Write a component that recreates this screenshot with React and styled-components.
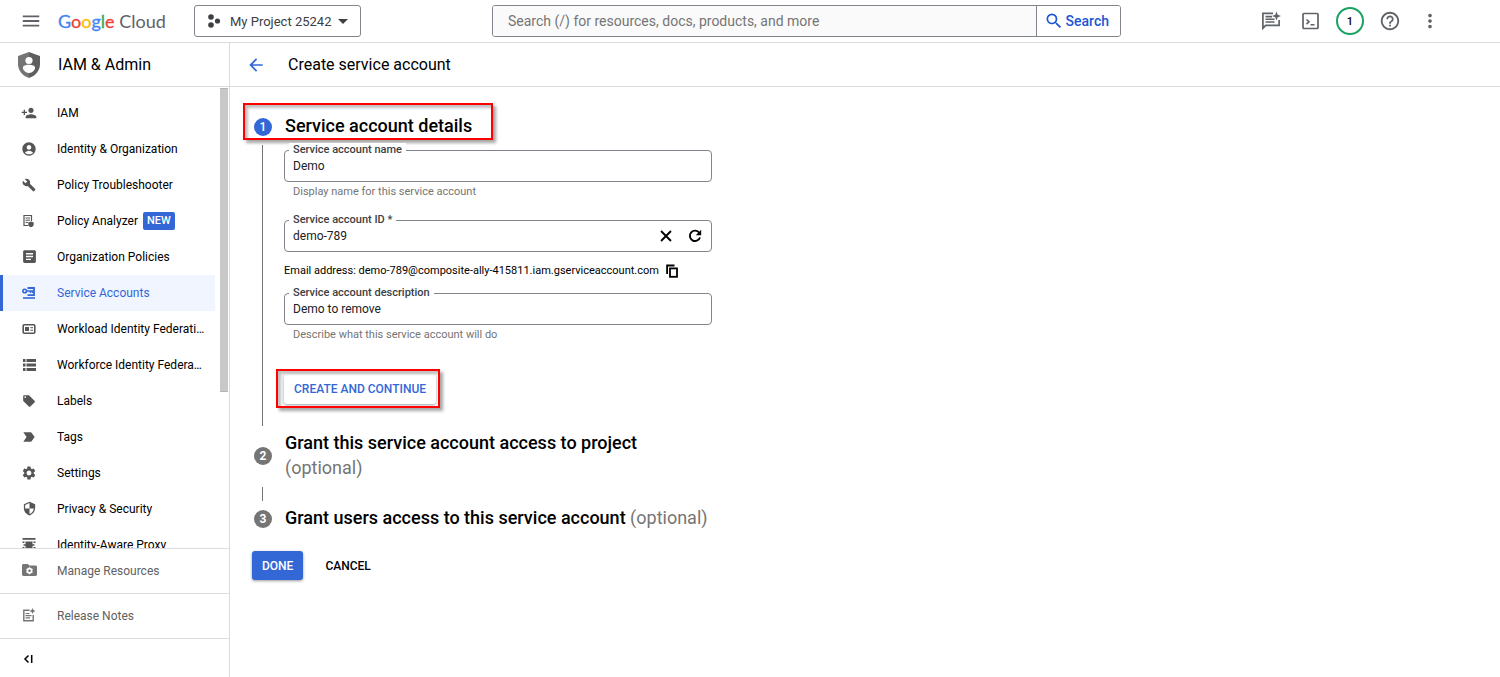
import React from 'react';
import styled, { createGlobalStyle } from 'styled-components';
import {
    MdPersonAdd,
    MdAccountCircle,
    MdBuild,
    MdArticle,
    MdLocalOffer,
    MdLabelImportant,
    MdSettings,
    MdSecurity,
    MdSearch,
    MdMenu,
    MdArrowDropDown,
    MdArrowBack,
    MdHelpOutline,
    MdMoreVert,
} from 'react-icons/md';

const GlobalStyle = createGlobalStyle`
    *, *::before, *::after {
        box-sizing: border-box;
    }
    body {
        margin: 0;
        background: #fff;
        color: #000;
        font-family: Roboto, "Liberation Sans", sans-serif;
        font-size: 12px;
    }
    button, input {
        font-family: inherit;
    }
    a {
        color: inherit;
        text-decoration: none;
    }
    svg {
        display: block;
        flex-shrink: 0;
    }
`;

const Page = styled.div`
    display: flex;
    flex-direction: column;
    height: 100vh;
`;

/* Top bar */

const TopBar = styled.header`
    display: grid;
    grid-template-columns: 492px minmax(0, 629px) 1fr;
    align-items: center;
    height: 43px;
    flex-shrink: 0;
    border-bottom: 1px solid #dadce0;
`;

const TopLeft = styled.div`
    display: flex;
    align-items: center;
    padding-left: 21px;
`;

const IconButton = styled.button`
    display: flex;
    align-items: center;
    justify-content: center;
    width: ${props => props.$size || 20}px;
    height: ${props => props.$size || 20}px;
    padding: 0;
    border: 0;
    background: none;
    color: ${props => props.$color || '#5f6368'};
    cursor: pointer;
`;

const Logo = styled.a`
    width: 136px;
    padding-left: 17px;
    font-family: Lato, sans-serif;
    font-size: 18px;
    line-height: 24px;
    color: #5f6368;
    white-space: nowrap;
`;

const LogoLetter = styled.span`
    color: ${props => props.$color};
    -webkit-text-stroke: 0.3px ${props => props.$color};
`;

const ProjectPicker = styled.button`
    display: flex;
    align-items: center;
    height: 32px;
    margin-left: 17px;
    padding: 0 5px 0 12px;
    border: 1px solid #80868b;
    border-radius: 3px;
    background: #fff;
    color: #3c4043;
    font-size: 13px;
    white-space: nowrap;
`;

const ProjectName = styled.span`
    margin-left: 9px;
`;

const SearchForm = styled.form`
    display: flex;
    height: 32px;
    border: 1px solid #80868b;
    border-radius: 3px;
    overflow: hidden;
`;

const SearchInput = styled.input`
    flex: 1;
    min-width: 0;
    padding: 0 15px;
    border: 0;
    border-right: 1px solid #80868b;
    background: #fafafa;
    font-size: 14px;
    &::placeholder {
        color: #757575;
        opacity: 1;
    }
`;

const SearchButton = styled.button`
    display: flex;
    align-items: center;
    gap: 2px;
    padding: 0 11px 0 7px;
    border: 0;
    background: #fff;
    color: #1a56d6;
    font-size: 14px;
    font-weight: 500;
`;

const TopRight = styled.div`
    display: flex;
    justify-content: flex-end;
    padding-right: 50px;
`;

const TrialBadge = styled.span`
    display: flex;
    align-items: center;
    justify-content: center;
    width: 28px;
    height: 28px;
    border: 2px solid #1aa260;
    border-radius: 50%;
    color: #000;
    font-size: 11px;
    font-weight: 500;
`;

/* Sidebar */

const Body = styled.div`
    display: grid;
    grid-template-columns: 230px minmax(0, 1fr);
    flex: 1;
    min-height: 0;
`;

const Sidebar = styled.aside`
    display: flex;
    flex-direction: column;
    min-height: 0;
    border-right: 1px solid #dadce0;
`;

const SectionHead = styled.div`
    display: flex;
    align-items: center;
    gap: ${props => (props.$wide ? 22 : 18)}px;
    height: 44px;
    flex-shrink: 0;
    padding-left: ${props => (props.$wide ? 16 : 18)}px;
    border-bottom: 1px solid #dadce0;
    font-size: 16px;
`;

const Heading = styled.h1`
    margin: 0;
    font-size: 16px;
    font-weight: 400;
`;

const NavScroll = styled.div`
    display: grid;
    grid-template-columns: minmax(0, 1fr) 8px;
    grid-template-rows: 100%;
    column-gap: 5px;
    flex: 1;
    min-height: 0;
    padding-right: 1px;
    overflow: hidden;
`;

const NavList = styled.ul`
    min-width: 0;
    margin: 0;
    padding: 8px 0 0;
    list-style: none;
`;

const NavLink = styled.a`
    display: flex;
    align-items: center;
    height: 36px;
    padding: 0 8px 0 19px;
    border-left: 3px solid ${props => (props.$active ? '#3367d6' : 'transparent')};
    background: ${props => (props.$active ? '#f0f5ff' : 'transparent')};
    color: ${props => (props.$active ? '#3367d6' : '#000')};
    svg {
        color: ${props => (props.$active ? '#3367d6' : '#555')};
    }
`;

const NavText = styled.span`
    margin-left: 21px;
    white-space: nowrap;
`;

const NewBadge = styled.span`
    margin-left: 5px;
    padding: 0 4px;
    border-radius: 2px;
    background: #3367d6;
    color: #fff;
    font-size: 11px;
    font-weight: 500;
    line-height: 18px;
`;

const ScrollThumb = styled.div`
    height: 66%;
    margin-top: 1px;
    background: #c8c8c8;
    border: solid #b4b4b4;
    border-width: 1px 0;
`;

const FootLink = styled.a`
    display: flex;
    align-items: center;
    height: 45px;
    flex-shrink: 0;
    padding: 0 0 1px 22px;
    border-top: 1px solid #dadce0;
    color: #616161;
`;

const CollapseRow = styled.div`
    display: flex;
    align-items: center;
    height: 39px;
    flex-shrink: 0;
    padding: 2px 0 0 18px;
    border-top: 1px solid #dadce0;
`;

/* Main */

const Main = styled.main`
    min-width: 0;
    min-height: 0;
`;

const Content = styled.div`
    padding: 26px 22px;
`;

const Steps = styled.div`
    max-width: 460px;
    padding-left: 2px;
`;

const StepHead = styled.div`
    position: relative;
    display: flex;
    align-items: center;
    gap: 13px;
    width: fit-content;
`;

const StepNumber = styled.span`
    display: flex;
    align-items: center;
    justify-content: center;
    width: 18px;
    height: 18px;
    flex-shrink: 0;
    border-radius: 50%;
    background: ${props => (props.$active ? '#3367d6' : '#757575')};
    color: #fff;
    font-size: 12px;
    font-weight: ${props => (props.$active ? 500 : 700)};
`;

const StepTitle = styled.h2`
    margin: 0;
    padding-bottom: 2px;
    font-size: 18px;
    font-weight: 500;
    line-height: 25px;
`;

const Optional = styled.span`
    color: #757575;
    font-weight: 400;
`;

const Rail = styled.div`
    min-height: 14px;
    margin: 5px 0 4px 8px;
    padding-left: 21px;
    border-left: 1px solid #757575;
`;

const Form = styled.form`
    padding: 5px 0 22px;
`;

/* red frame drawn around the thing to click */
const Marker = styled.span`
    position: absolute;
    inset: ${props => props.$inset};
    border: 2px solid #f00;
    box-shadow: 3px 3px 3px rgba(0, 0, 0, 0.35), inset 3px 3px 3px rgba(0, 0, 0, 0.25);
    pointer-events: none;
`;

const FieldBox = styled.div`
    position: relative;
    display: flex;
    align-items: center;
    gap: 9px;
    height: 32px;
    padding: 0 6px 0 8px;
    border: 1px solid #80868b;
    border-radius: 4px;
`;

const FieldLabel = styled.label`
    position: absolute;
    top: -8px;
    left: 4px;
    padding: 0 4px;
    background: #fff;
    color: #3c4043;
    font-size: 11px;
    font-weight: 500;
    line-height: 14px;
`;

const FieldInput = styled.input`
    flex: 1;
    min-width: 0;
    padding: 0;
    border: 0;
    outline: 0;
    background: none;
    color: #202124;
    font-size: 12px;
`;

const Hint = styled.div`
    padding: 1px 0 0 9px;
    color: #757575;
    font-size: 11px;
    line-height: 18px;
`;

const EmailRow = styled.div`
    display: flex;
    align-items: center;
    gap: 4px;
    margin: 10px 0 13px;
    font-size: 11px;
    line-height: 18px;
    white-space: nowrap;
`;

const IdField = styled.div`
    margin-top: 19px;
`;

const CreateWrap = styled.div`
    position: relative;
    width: fit-content;
    margin-top: 30px;
`;

const Button = styled.button`
    height: ${props => props.$height || 29}px;
    padding: 0 10px;
    border: 0;
    border-radius: 3px;
    background: ${props => (props.$primary ? '#3367d6' : '#fff')};
    color: ${props => props.$color};
    box-shadow: ${props => (props.$flat ? 'none' : '0 1px 3px rgba(0, 0, 0, 0.4)')};
    font-size: 12px;
    font-weight: 500;
`;

const Actions = styled.div`
    display: flex;
    gap: 12px;
    margin-top: 19px;
`;

/* Icons that the md set does not have */

const Shield = () => (
    <svg width="22" height="26" viewBox="0 0 22 26">
        <path d="M11 0L0 4v8c0 6.600 4.700 12 11 14z" fill="#757575" />
        <path d="M11 0l11 4v8c0 6.600-4.700 12-11 14z" fill="#5f5f5f" />
        <circle cx="11" cy="8.500" r="3.600" fill="#fff" />
        <path d="M5 17v-1.500c0-1.700 2.800-2.700 6-2.700s6 1 6 2.700V17c-1.600 2.600-3.500 3.900-6 3.900S6.600 19.600 5 17z" fill="#fff" />
    </svg>
);

const ProjectDots = () => (
    <svg width="14" height="14" viewBox="0 0 14 14" fill="#3c4043">
        <circle cx="4" cy="3" r="2.800" />
        <circle cx="10.500" cy="7" r="2.600" />
        <circle cx="4" cy="11" r="2.800" />
    </svg>
);

const PolicyAnalyzerIcon = () => (
    <svg width="14" height="14" viewBox="0 0 14 14" fill="none" stroke="currentColor">
        <path d="M6.500 11.500H2V1.500h7.500V7" strokeWidth="1.200" />
        <path d="M3.500 4h4.500M3.500 6.200h4.500M3.500 8.400h2.500" />
        <path d="M9 7.500l2.700 1v1.700c0 1.500-1 2.500-2.700 3.100-1.700-.6-2.700-1.600-2.700-3.100V8.500z" fill="currentColor" stroke="none" />
    </svg>
);

const ServiceAccountIcon = () => (
    <svg width="14" height="14" viewBox="0 0 14 14" fill="none" stroke="currentColor">
        <circle cx="2.700" cy="5" r="1.800" strokeWidth="1.600" />
        <path d="M4.500 5h6v2M8.500 5v2" strokeWidth="1.400" />
        <path d="M5.500 2h6.500v7.200H5.500" strokeWidth="1.800" />
        <path d="M1 12h12" strokeWidth="1.600" />
    </svg>
);

const WorkloadIcon = () => (
    <svg width="14" height="14" viewBox="0 0 14 14" fill="none" stroke="currentColor">
        <rect x="1.200" y="2.700" width="11.600" height="8.600" rx="1" strokeWidth="1.600" />
        <rect x="3" y="5" width="4" height="4" fill="currentColor" stroke="none" />
        <path d="M8.300 5.700h2.700M8.300 8.200h2.700" />
    </svg>
);

const WorkforceIcon = () => (
    <svg width="14" height="14" viewBox="0 0 14 14" fill="currentColor">
        <path d="M1 1h2.500v3H1zM4.500 1H14v3H4.500zM1 5.500h2.500v3H1zM4.500 5.500H14v3H4.500zM1 10h2.500v3H1zM4.500 10H14v3H4.500z" />
    </svg>
);

const ProxyIcon = () => (
    <svg width="14" height="14" viewBox="0 0 14 14" fill="currentColor">
        <path d="M.5 0h13v1.800H.5zM.5 12.200h13V14H.5zM3.500 3.500h7v7h-7zM.5 3.500h2v1.500H.5zM11.500 3.500h2v1.500h-2zM.5 9h2v1.500H.5zM11.500 9h2v1.500h-2zM1.500 6.200h11v1.600h-11z" />
    </svg>
);

const FolderGearIcon = () => (
    <svg width="15" height="14" viewBox="0 0 15 14">
        <path d="M1.500 1h4.300l1.500 1.600h6.200c.8 0 1.500.6 1.500 1.400v7.600c0 .8-.7 1.400-1.500 1.400h-12C.7 13 0 12.400 0 11.600V2.400C0 1.600.7 1 1.500 1z" fill="#757575" />
        <circle cx="7.500" cy="7.700" r="2.100" fill="none" stroke="#fff" strokeWidth="1.600" />
        <path d="M7.500 4.200v1.300M7.500 9.900v1.300M4.500 6l1.100.6M9.400 8.800l1.100.6M4.500 9.400l1.100-.6M9.400 6.600l1.100-.6" stroke="#fff" strokeWidth="1.400" />
    </svg>
);

const ReleaseNotesIcon = () => (
    <svg width="15" height="14" viewBox="0 0 15 14" fill="none" stroke="#757575" strokeWidth="1.400">
        <path d="M7.500 2.200H1.800v10.600h9.400V7" />
        <path d="M3.500 5.500h4M3.500 7.700h6M3.500 9.900h4.500" strokeWidth="1.200" />
        <path d="M10.500 0l.9 2.100 2.100.9-2.100.9-.9 2.100-.9-2.100L7.500 3l2.100-.9z" fill="#757575" stroke="none" />
    </svg>
);

const FeedbackIcon = () => (
    <svg width="22" height="20" viewBox="-2 0 22 20" fill="none" stroke="currentColor" strokeWidth="1.700">
        <path d="M12 2.300H1.900v14.900l2.800-2.800h13.400V9" />
        <path d="M4.500 5.600h6.500M4.500 8.300h9M4.500 11h9" strokeWidth="1.600" />
        <path d="M15.500.5l1.200 3.300L20 5l-3.300 1.200-1.200 3.300-1.200-3.300L11 5l3.300-1.200z" fill="currentColor" stroke="none" />
    </svg>
);

const ShellIcon = () => (
    <svg width="20" height="18" viewBox="-2 0 20 18" fill="none" stroke="currentColor" strokeWidth="1.700">
        <rect x="1" y="1.500" width="15" height="15" rx="1" />
        <path d="M4.500 7.500l2.500 2.300-2.500 2.300M8.500 12.800h4" strokeWidth="1.600" />
    </svg>
);

const ClearIcon = () => (
    <svg width="12" height="12" viewBox="0 0 12 12" fill="none" stroke="currentColor" strokeWidth="1.900">
        <path d="M1 1l10 10M11 1L1 11" />
    </svg>
);

const RegenerateIcon = () => (
    <svg width="14" height="14" viewBox="0 0 14 14" fill="none" stroke="currentColor" strokeWidth="1.900">
        <path d="M11.300 3.800A5.200 5.200 0 1 0 12 8.500" />
        <path d="M13.200.8v5.400H7.800z" fill="currentColor" stroke="none" />
    </svg>
);

const CopyIcon = () => (
    <svg width="12" height="14" viewBox="0 0 12 14" fill="none" stroke="currentColor" strokeWidth="1.800">
        <path d="M1.100 10V1.500h7.400" />
        <rect x="4" y="4.400" width="7" height="8.400" />
    </svg>
);

const CollapseIcon = () => (
    <svg width="12" height="12" viewBox="0 0 12 12" fill="none" stroke="#000" strokeWidth="1.500">
        <path d="M6.500 2.500L3 6l3.500 3.500M9.700 2v8" />
    </svg>
);

const navItems = [
    { text: 'IAM', icon: <MdPersonAdd size={16} /> },
    { text: 'Identity & Organization', icon: <MdAccountCircle size={16} /> },
    { text: 'Policy Troubleshooter', icon: <MdBuild size={14} /> },
    { text: 'Policy Analyzer', icon: <PolicyAnalyzerIcon />, isNew: true },
    { text: 'Organization Policies', icon: <MdArticle size={17} /> },
    { text: 'Service Accounts', icon: <ServiceAccountIcon />, active: true },
    { text: 'Workload Identity Federati…', icon: <WorkloadIcon /> },
    { text: 'Workforce Identity Federa…', icon: <WorkforceIcon /> },
    { text: 'Labels', icon: <MdLocalOffer size={14} /> },
    { text: 'Tags', icon: <MdLabelImportant size={16} /> },
    { text: 'Settings', icon: <MdSettings size={16} /> },
    { text: 'Privacy & Security', icon: <MdSecurity size={15} /> },
    { text: 'Identity-Aware Proxy', icon: <ProxyIcon /> },
];

const NavIcon = styled.span`
    display: flex;
    justify-content: center;
    width: 14px;
    flex-shrink: 0;
    padding-bottom: 1px;
`;

const logoLetters = [
    ['G', '#4285f4'],
    ['o', '#ea4335'],
    ['o', '#fbbc04'],
    ['g', '#4285f4'],
    ['l', '#34a853'],
    ['e', '#ea4335'],
];

const Header = () => {
    return (
        <TopBar>
            <TopLeft>
                <IconButton aria-label="Menu"><MdMenu size={22} /></IconButton>
                <Logo href="#">
                    {logoLetters.map(([letter, color], i) => (
                        <LogoLetter key={i} $color={color}>{letter}</LogoLetter>
                    ))}
                    {' '}Cloud
                </Logo>
                <ProjectPicker>
                    <ProjectDots />
                    <ProjectName>My Project 25242</ProjectName>
                    <MdArrowDropDown size={24} />
                </ProjectPicker>
            </TopLeft>
            <SearchForm>
                <SearchInput
                    aria-label="Search"
                    placeholder="Search (/) for resources, docs, products, and more"
                />
                <SearchButton type="button"><MdSearch size={20} />Search</SearchButton>
            </SearchForm>
            <TopRight>
                <IconButton $size={40} aria-label="Feedback"><FeedbackIcon /></IconButton>
                <IconButton $size={40} aria-label="Cloud Shell"><ShellIcon /></IconButton>
                <IconButton $size={40} aria-label="Free trial status"><TrialBadge>1</TrialBadge></IconButton>
                <IconButton $size={40} aria-label="Help"><MdHelpOutline size={22} /></IconButton>
                <IconButton $size={40} aria-label="More"><MdMoreVert size={22} /></IconButton>
            </TopRight>
        </TopBar>
    )
}

const SideNav = () => {
    return (
        <Sidebar>
            <SectionHead><Shield />IAM &amp; Admin</SectionHead>
            <NavScroll>
                <NavList>
                    {navItems.map(item => (
                        <li key={item.text}>
                            <NavLink href="#" $active={item.active}>
                                <NavIcon>{item.icon}</NavIcon>
                                <NavText>{item.text}</NavText>
                                {item.isNew && <NewBadge>NEW</NewBadge>}
                            </NavLink>
                        </li>
                    ))}
                </NavList>
                <ScrollThumb />
            </NavScroll>
            <FootLink href="#"><NavIcon><FolderGearIcon /></NavIcon><NavText>Manage Resources</NavText></FootLink>
            <FootLink href="#"><NavIcon><ReleaseNotesIcon /></NavIcon><NavText>Release Notes</NavText></FootLink>
            <CollapseRow>
                <IconButton aria-label="Collapse menu"><CollapseIcon /></IconButton>
            </CollapseRow>
        </Sidebar>
    )
}

const Field = ({ id, label, value, hint, children }) => {
    return (
        <>
            <FieldBox>
                <FieldLabel htmlFor={id}>{label}</FieldLabel>
                <FieldInput id={id} type="text" defaultValue={value} />
                {children}
            </FieldBox>
            {hint && <Hint>{hint}</Hint>}
        </>
    )
}

const App = () => {
    return (
        <Page>
            <GlobalStyle />
            <Header />
            <Body>
                <SideNav />
                <Main>
                    <SectionHead $wide>
                        <IconButton $color="#3367d6" aria-label="Back"><MdArrowBack size={20} /></IconButton>
                        <Heading>Create service account</Heading>
                    </SectionHead>
                    <Content>
                        <Steps>
                            <StepHead>
                                <StepNumber $active>1</StepNumber>
                                <StepTitle>Service account details</StepTitle>
                                <Marker $inset="-10px -21px 0 -11px" />
                            </StepHead>
                            <Rail>
                                <Form>
                                    <Field id="name" label="Service account name" value="Demo" hint="Display name for this service account" />
                                    <IdField>
                                        <Field id="account-id" label="Service account ID *" value="demo-789">
                                            <IconButton type="button" $color="#000" aria-label="Clear"><ClearIcon /></IconButton>
                                            <IconButton type="button" $color="#000" aria-label="Regenerate"><RegenerateIcon /></IconButton>
                                        </Field>
                                    </IdField>
                                    <EmailRow>
                                        Email address: demo-789@composite-ally-415811.iam.gserviceaccount.com
                                        <IconButton type="button" $color="#000" $size={18} aria-label="Copy"><CopyIcon /></IconButton>
                                    </EmailRow>
                                    <Field id="description" label="Service account description" value="Demo to remove" hint="Describe what this service account will do" />
                                    <CreateWrap>
                                        <Button type="button" $height={30} $color="#3367d6">CREATE AND CONTINUE</Button>
                                        <Marker $inset="-5px -4px -4px -8px" />
                                    </CreateWrap>
                                </Form>
                            </Rail>
                            <StepHead>
                                <StepNumber>2</StepNumber>
                                <StepTitle>Grant this service account access to project <Optional>(optional)</Optional></StepTitle>
                            </StepHead>
                            <Rail />
                            <StepHead>
                                <StepNumber>3</StepNumber>
                                <StepTitle>Grant users access to this service account <Optional>(optional)</Optional></StepTitle>
                            </StepHead>
                        </Steps>
                        <Actions>
                            <Button $primary $color="#fff">DONE</Button>
                            <Button $flat $color="#000">CANCEL</Button>
                        </Actions>
                    </Content>
                </Main>
            </Body>
        </Page>
    )
}

export default App;
